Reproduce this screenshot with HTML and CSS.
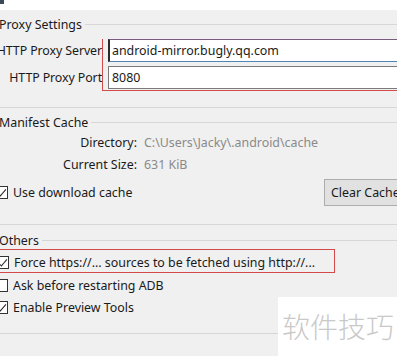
FILE: index.html
```html
<!DOCTYPE html>
<html>
<head>
    <title>Android SDK Updater Settings</title>
    <link rel="stylesheet" href="styles.css">
</head>
<body>
    <div class="titlebar">
        <span class="app-icon"></span>
    </div>

    <!-- Proxy settings -->
    <div class="group-title"><span>Proxy Settings</span></div>
    <div class="proxy-form">
        <div class="proxy-labels">
            <label for="proxy_server">HTTP Proxy Server</label>
            <label for="proxy_port">HTTP Proxy Port</label>
        </div>
        <div class="highlight proxy-fields">
            <input type="text" id="proxy_server" class="field field-focus" value="android-mirror.bugly.qq.com">
            <input type="text" id="proxy_port" class="field" value="8080">
        </div>
    </div>
    <hr class="separator sep-proxy">

    <!-- Manifest cache -->
    <div class="group-title"><span>Manifest Cache</span></div>
    <div class="info-grid">
        <span class="info-label">Directory:</span>
        <span class="info-value">C:\Users\Jacky\.android\cache</span>
        <span class="info-label">Current Size:</span>
        <span class="info-value">631 KiB</span>
    </div>
    <div class="cache-row">
        <label class="check-row"><span class="checkbox checked"></span>Use download cache</label>
        <button type="button" class="btn">Clear Cache</button>
    </div>
    <hr class="separator sep-cache">

    <!-- Others -->
    <div class="group-title group-others"><span>Others</span></div>
    <div class="highlight force-box">
        <label class="check-row"><span class="checkbox checked"></span>Force https://... sources to be fetched using http://...</label>
    </div>
    <label class="check-row row-ask"><span class="checkbox"></span>Ask before restarting ADB</label>
    <label class="check-row"><span class="checkbox checked"></span>Enable Preview Tools</label>
    <hr class="separator sep-bottom">

    <div class="watermark">软件技巧</div>
</body>
</html>
```

FILE: styles.css
```css
body {
    font-family: "Noto Sans", "Noto Sans CJK SC", sans-serif;
    font-size: 12.4px;
    color: #1a1a1a;
    margin: 0;
    padding: 0;
    background-color: #f0f0f0;
    width: 397px;
    height: 356px;
    overflow: hidden;
    position: relative;
}
.titlebar {
    height: 10px;
    background-color: #fff;
}
.app-icon {
    display: block;
    width: 4px;
    height: 4px;
    background-color: #3c4a5a;
}
.group-title {
    display: flex;
    align-items: center;
    height: 16px;
    margin-top: 6px;
    margin-left: -1px;
}
.group-title::after {
    content: "";
    flex: 1;
    border-top: 1px solid #d7d7d7;
    margin-left: 3px;
}
.highlight {
    border: 1px solid #d24a4a;
}
.proxy-form {
    display: flex;
    margin-top: 7px;
}
.proxy-labels {
    width: 102px;
    display: flex;
    flex-direction: column;
    align-items: flex-end;
    gap: 4px;
}
.proxy-labels label {
    height: 23px;
    line-height: 23px;
    white-space: nowrap;
    letter-spacing: -0.1px;
}
.proxy-fields {
    border-top: none;
    flex: 1;
    margin-right: -40px;
    padding: 0 0 1px 5px;
    display: flex;
    flex-direction: column;
    gap: 4px;
}
.field {
    height: 23px;
    box-sizing: border-box;
    border: 1px solid #7a7a7a;
    background-color: #fff;
    font-family: inherit;
    font-size: 12.4px;
    padding: 0 3px;
    margin: 0;
    color: #1a1a1a;
    outline: none;
}
.field-focus {
    border-color: #4f86b8;
    border-top-color: #7b5a80;
    border-left: 2px solid #2a2a2a;
    padding-left: 2px;
}
.separator {
    border: none;
    border-top: 1px solid #d7d7d7;
    margin: 0;
}
.sep-proxy {
    margin-top: 16px;
}
.info-grid {
    display: grid;
    grid-template-columns: 137px auto;
    column-gap: 7px;
    row-gap: 6px;
    margin-top: 5px;
}
.info-grid span {
    height: 16px;
    line-height: 16px;
}
.info-label {
    text-align: right;
}
.info-value {
    color: #8a8a8a;
}
.cache-row {
    display: flex;
    align-items: center;
    justify-content: space-between;
    margin-top: 6px;
    margin-right: -40px;
}
.btn {
    height: 27px;
    width: 113px;
    box-sizing: border-box;
    background-color: #e1e1e1;
    border: 1px solid #adadad;
    font-family: inherit;
    font-size: 12.4px;
    color: #1a1a1a;
    text-align: left;
    padding: 0 6px;
}
.sep-cache {
    margin-top: 18px;
}
.group-others {
    margin-top: 7px;
}
.check-row {
    display: flex;
    align-items: center;
    height: 22px;
    margin-left: -5px;
    white-space: nowrap;
}
.checkbox {
    width: 13px;
    height: 13px;
    box-sizing: border-box;
    border: 1px solid #333;
    background-color: #fff;
    margin-right: 5px;
    position: relative;
}
.checkbox.checked::after {
    content: "";
    position: absolute;
    left: 3px;
    top: 0px;
    width: 4px;
    height: 8px;
    border-right: 1px solid #222;
    border-bottom: 1px solid #222;
    transform: rotate(40deg);
}
.force-box {
    margin-top: 1px;
    margin-left: -5px;
    width: 338px;
    height: 20px;
    display: flex;
    align-items: center;
    padding-top: 2px;
    box-sizing: content-box;
}
.force-box .check-row {
    margin-left: 0;
    height: 20px;
}
.row-ask {
    margin-top: 1px;
}
.sep-bottom {
    margin-top: 15px;
}
.watermark {
    position: absolute;
    left: 278px;
    top: 297px;
    width: 119px;
    height: 59px;
    background-color: #fff;
    color: #c9c9c9;
    font-family: "Noto Sans CJK SC", sans-serif;
    font-size: 28px;
    font-weight: 300;
    line-height: 59px;
    padding-left: 4px;
    box-sizing: border-box;
}
```
